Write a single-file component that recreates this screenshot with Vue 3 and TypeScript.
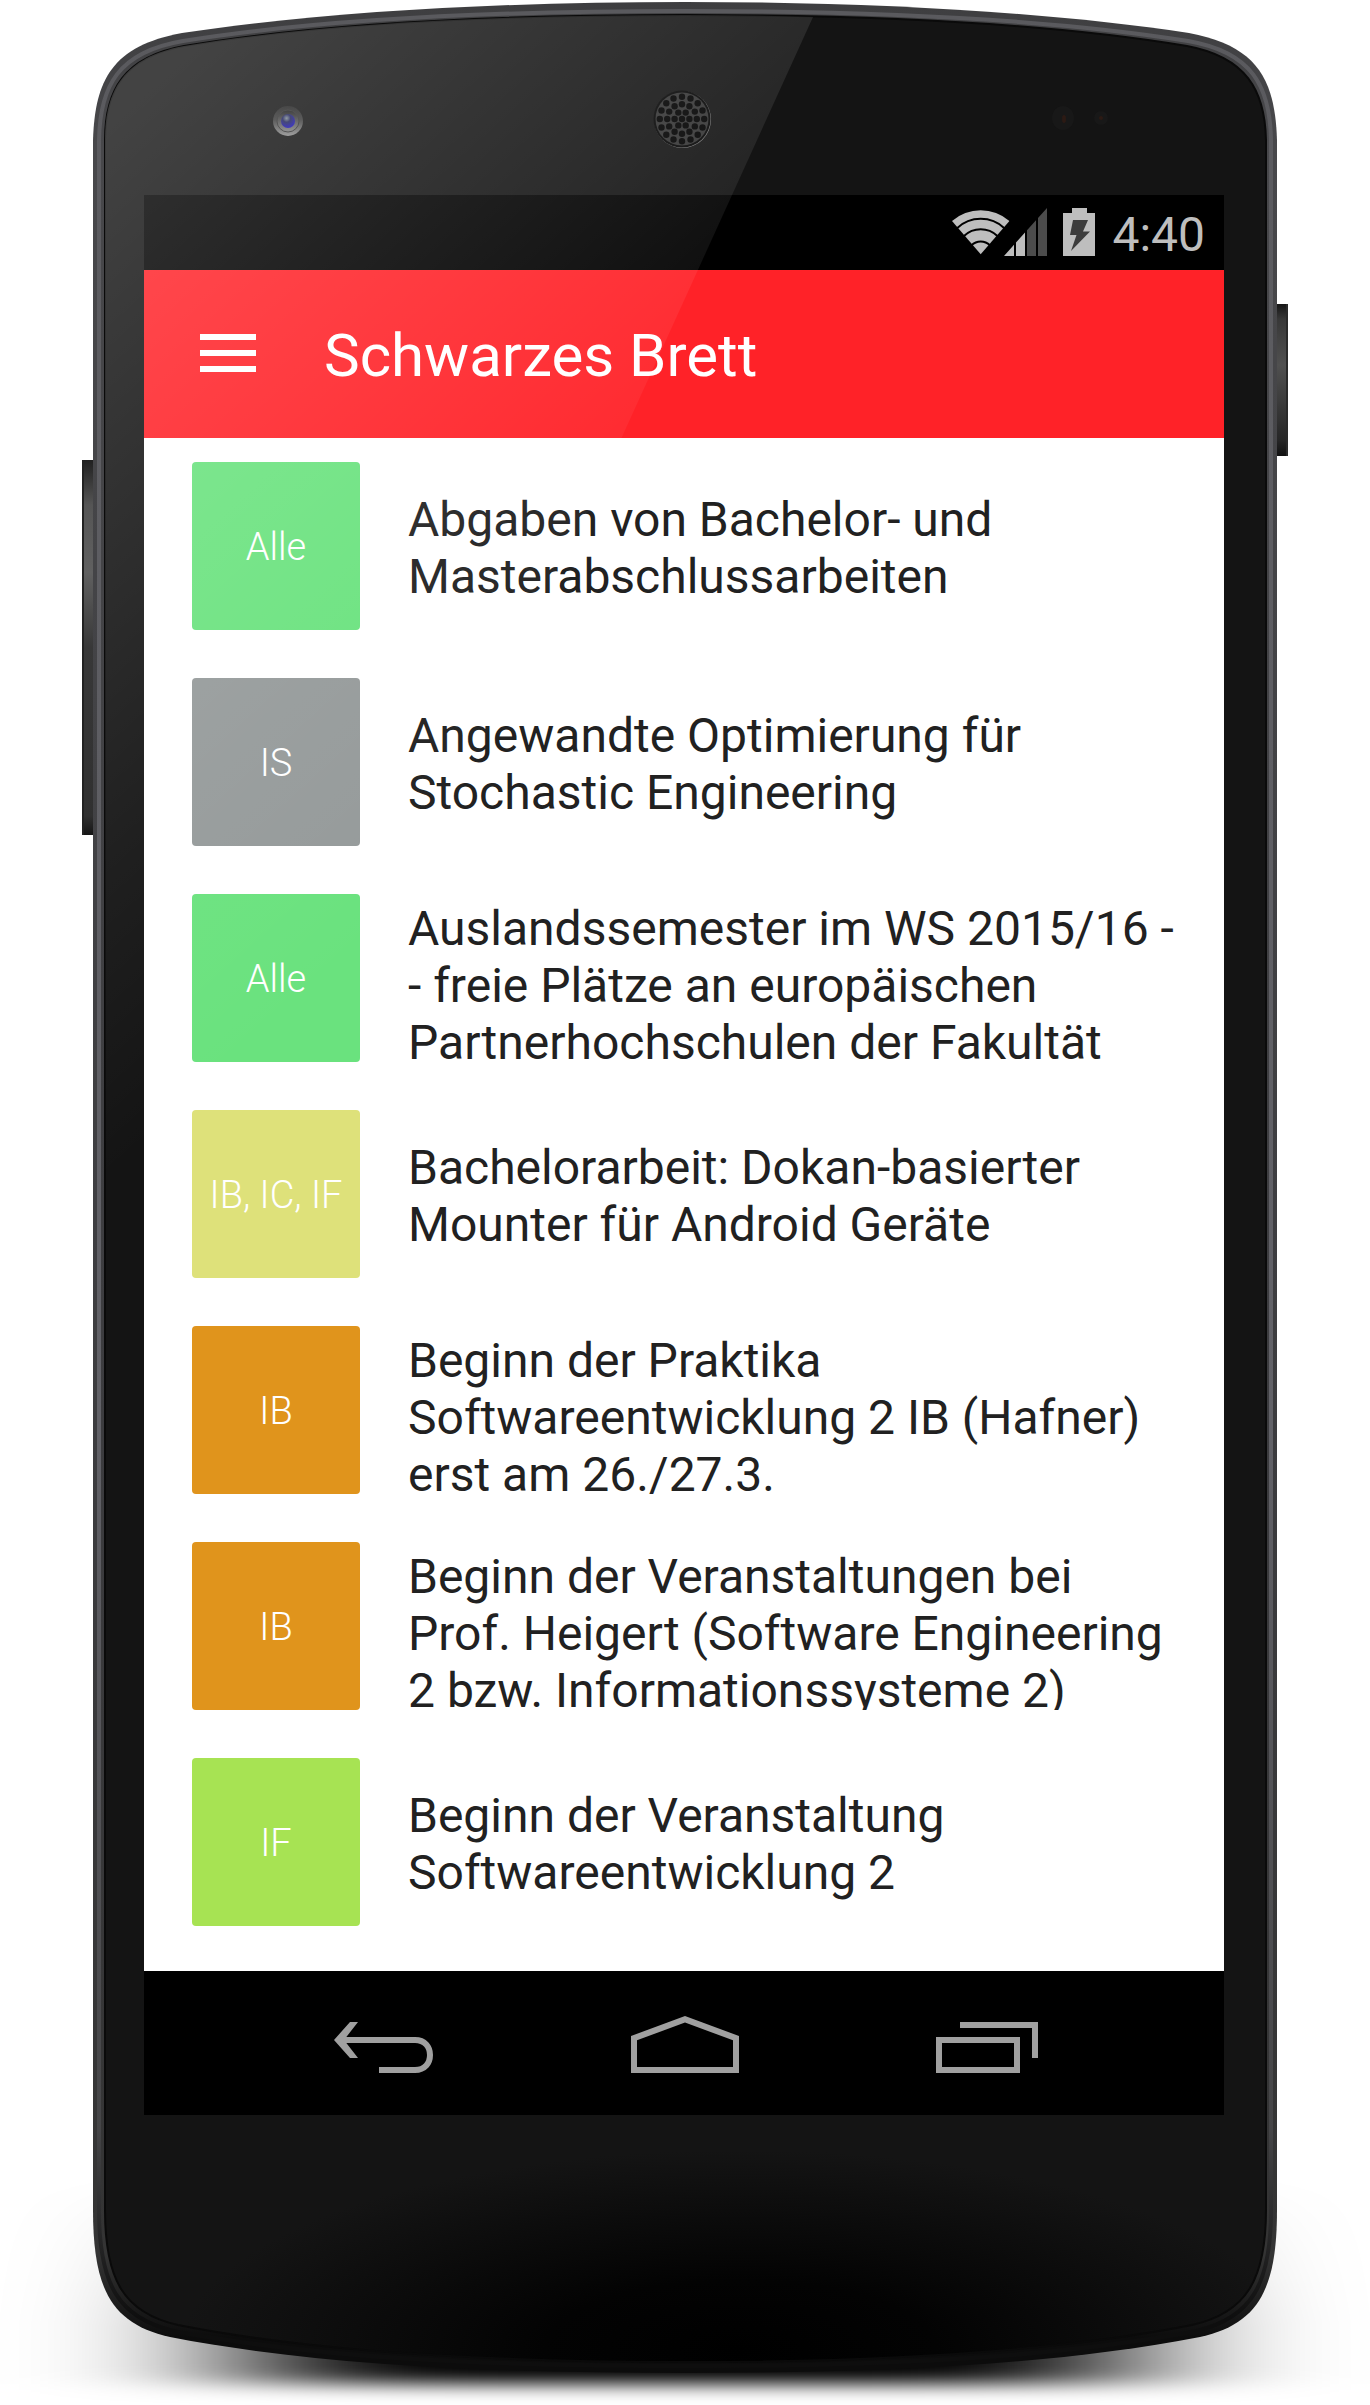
<script setup lang="ts">
interface Notice {
  id: number
  groups: string
  color: string
  title: string
}

const notices: Notice[] = [
  { id: 1, groups: 'Alle', color: '#6ae27e', title: 'Abgaben von Bachelor- und\nMasterabschlussarbeiten' },
  { id: 2, groups: 'IS', color: '#959a9a', title: 'Angewandte Optimierung für\nStochastic Engineering' },
  { id: 3, groups: 'Alle', color: '#6ae27e', title: 'Auslandssemester im WS 2015/16 -\n- freie Plätze an europäischen\nPartnerhochschulen der Fakultät' },
  { id: 4, groups: 'IB, IC, IF', color: '#dee17a', title: 'Bachelorarbeit: Dokan-basierter\nMounter für Android Geräte' },
  { id: 5, groups: 'IB', color: '#e0941c', title: 'Beginn der Praktika\nSoftwareentwicklung 2 IB (Hafner)\nerst am 26./27.3.' },
  { id: 6, groups: 'IB', color: '#e0941c', title: 'Beginn der Veranstaltungen bei\nProf. Heigert (Software Engineering\n2 bzw. Informationssysteme 2)' },
  { id: 7, groups: 'IF', color: '#a7e353', title: 'Beginn der Veranstaltung\nSoftwareentwicklung 2' },
]

interface Hole {
  x: number
  y: number
}

// Earpiece perforation: concentric rings around one centre hole
const rings = [
  { count: 1, radius: 0 },
  { count: 6, radius: 7.4 },
  { count: 12, radius: 14.8 },
  { count: 16, radius: 22.2 },
]
const holes: Hole[] = rings.flatMap(({ count, radius }) =>
  Array.from({ length: count }, (_, i) => {
    const angle = (i / count) * Math.PI * 2
    return { x: 30 + radius * Math.cos(angle), y: 30 + radius * Math.sin(angle) }
  }),
)
</script>

<template>
  <div class="device">
    <svg class="chassis" viewBox="0 0 1370 2405" preserveAspectRatio="none" aria-hidden="true">
      <defs>
        <linearGradient id="shadowFade" x1="0" y1="0" x2="0" y2="1">
          <stop offset="0" stop-color="#000" stop-opacity="0" />
          <stop offset="0.7" stop-color="#000" stop-opacity="1" />
        </linearGradient>
        <filter id="shadowBlur" x="-50%" y="-50%" width="200%" height="200%">
          <feGaussianBlur stdDeviation="105 9" />
        </filter>
        <linearGradient id="rim" x1="0" y1="0" x2="0" y2="1">
          <stop offset="0" stop-color="#3e3e40" />
          <stop offset="0.06" stop-color="#48484b" />
          <stop offset="0.6" stop-color="#3c3c3f" />
          <stop offset="0.95" stop-color="#343434" />
          <stop offset="0.985" stop-color="#0c0c0c" />
        </linearGradient>
        <linearGradient id="rimLight" x1="0" y1="0" x2="0" y2="1">
          <stop offset="0" stop-color="#5a5a5e" />
          <stop offset="0.6" stop-color="#626268" />
          <stop offset="0.9" stop-color="#454547" />
          <stop offset="0.98" stop-color="#0e0e0e" />
        </linearGradient>
        <radialGradient id="face" gradientUnits="userSpaceOnUse" cx="0" cy="0" r="1" gradientTransform="translate(740 2350) scale(560 200)">
          <stop offset="0" stop-color="#000" />
          <stop offset="0.35" stop-color="#030303" />
          <stop offset="1" stop-color="#141414" />
        </radialGradient>
        <linearGradient id="keyLeft" x1="0" y1="0" x2="0" y2="1">
          <stop offset="0" stop-color="#202020" />
          <stop offset="0.12" stop-color="#555" />
          <stop offset="0.3" stop-color="#606060" />
          <stop offset="0.5" stop-color="#383838" />
          <stop offset="0.95" stop-color="#303030" />
          <stop offset="1" stop-color="#151515" />
        </linearGradient>
        <linearGradient id="keyRight" x1="0" y1="0" x2="0" y2="1">
          <stop offset="0" stop-color="#151515" />
          <stop offset="0.1" stop-color="#383838" />
          <stop offset="0.4" stop-color="#505050" />
          <stop offset="0.9" stop-color="#262626" />
          <stop offset="1" stop-color="#111" />
        </linearGradient>
      </defs>
      <rect x="250" y="2180" width="870" height="204" fill="url(#shadowFade)" filter="url(#shadowBlur)" />
      <rect x="82" y="460" width="14" height="375" rx="1" fill="url(#keyLeft)" />
      <rect x="82" y="460" width="2" height="375" fill="#222" />
      <rect x="1274" y="304" width="14" height="152" rx="1" fill="url(#keyRight)" />
      <rect x="1286" y="304" width="2" height="152" fill="#2a2a2a" />
      <path
        fill="url(#rim)"
        d="M93 140C95 80 112 46 182 33C320 12 500 2 685 2C870 2 1050 12 1189 33C1258 46 1275 80 1277 140V2210C1277 2290 1258 2324 1200 2337C1050 2366 870 2373 685 2373C500 2373 320 2366 170 2337C112 2324 93 2290 93 2210Z"
      />
      <path
        fill="none"
        stroke="url(#rimLight)"
        stroke-width="4"
        d="M99 140C100 86 118 52 183 41C320 19 500 11 685 11C870 11 1050 19 1188 41C1252 52 1270 86 1271 140V2210C1271 2284 1252 2318 1196 2331C1050 2359 870 2366 685 2366C500 2366 320 2359 174 2331C118 2318 99 2284 99 2210Z"
      />
      <path
        fill="url(#face)"
        stroke="#0a0a0a"
        stroke-width="2"
        d="M105 140C105 90 124 57 184 46C320 23 500 15 685 15C870 15 1050 23 1187 46C1246 57 1265 90 1266 140V2210C1266 2280 1246 2313 1192 2325C1050 2353 870 2362 685 2362C500 2362 320 2353 178 2325C124 2313 105 2280 105 2210Z"
      />
    </svg>

    <div class="bezel" aria-hidden="true">
      <svg class="camera" width="56" height="60" viewBox="0 0 56 60">
        <defs>
          <linearGradient id="camRing" x1="0" y1="0" x2="0" y2="1">
            <stop offset="0" stop-color="#222" />
            <stop offset="0.45" stop-color="#3a3a3a" />
            <stop offset="1" stop-color="#8c8c8c" />
          </linearGradient>
          <linearGradient id="camInner" x1="0" y1="0" x2="0" y2="1">
            <stop offset="0" stop-color="#1a1a1a" />
            <stop offset="1" stop-color="#808080" />
          </linearGradient>
          <radialGradient id="lens" cx="0.4" cy="0.3" r="0.7">
            <stop offset="0" stop-color="#7c8890" />
            <stop offset="0.4" stop-color="#20245a" />
            <stop offset="1" stop-color="#1a12b0" />
          </radialGradient>
        </defs>
        <circle cx="28" cy="32" r="15" fill="url(#camRing)" />
        <circle cx="28" cy="32" r="11" fill="url(#camInner)" stroke="#333" />
        <circle cx="28" cy="32" r="7" fill="url(#lens)" />
      </svg>
      <svg class="earpiece" width="60" height="60" viewBox="0 0 60 60">
        <circle cx="30.5" cy="30.5" r="28.5" fill="#777" />
        <circle cx="30" cy="30" r="28.5" fill="#050505" />
        <circle cx="30" cy="30" r="26.5" fill="#343434" />
        <circle v-for="(hole, i) in holes" :key="i" :cx="hole.x" :cy="hole.y" r="3.2" fill="#000" />
      </svg>
      <svg class="sensors" width="60" height="60" viewBox="0 0 60 60">
        <ellipse cx="15" cy="29" rx="11" ry="12" fill="#181818" />
        <ellipse cx="16" cy="30" rx="2" ry="4" fill="#2c1a14" />
        <circle cx="53" cy="29" r="7" fill="#181818" />
        <circle cx="53" cy="29" r="2" fill="#2c1a14" />
      </svg>
    </div>

    <div class="screen">
      <div class="status">
        <svg width="95" height="48" viewBox="0 0 95 48" role="img" aria-label="WLAN und Mobilfunk">
          <path fill="#bebebe" d="M28.7 46.3L0 13A44 44 0 0 1 57.4 13Z" />
          <g fill="none" stroke="#000" stroke-width="2">
            <path d="M5 20.2A34.6 34.6 0 0 1 52.4 20.2" />
            <path d="M12 28A24 24 0 0 1 45.4 28" />
            <path d="M19.5 37.2A13 13 0 0 1 37.9 37.2" />
          </g>
          <path fill="#bebebe" d="M52 48L62 36.8V48ZM64 34.6L73 24.5V48H64Z" />
          <path fill="#4c4c4c" d="M75 22.3L84 12.3V48H75ZM86 10L95 0V48H86Z" />
        </svg>
        <svg width="32" height="48" viewBox="0 0 32 48" role="img" aria-label="Akku wird geladen">
          <path fill="#bebebe" d="M0 5H9V0H24V5H32V48H0Z" />
          <path fill="#3c3c3c" d="M10 12H25L20 23.5H27L8 43L13.5 27H7Z" />
        </svg>
        <time class="clock">4:40</time>
      </div>

      <header class="appbar">
        <button class="menu" type="button" aria-label="Menü">
          <svg width="56" height="40" viewBox="0 0 56 40">
            <path fill="#fff" d="M0 0H56V6H0ZM0 16H56V22H0ZM0 32H56V38H0Z" />
          </svg>
        </button>
        <h1 class="title">Schwarzes Brett</h1>
      </header>

      <main class="board">
        <ul class="list">
          <li v-for="notice in notices" :key="notice.id" class="notice">
            <span class="tile" :style="{ backgroundColor: notice.color }">{{ notice.groups }}</span>
            <p class="text">{{ notice.title }}</p>
          </li>
        </ul>
      </main>

      <nav class="navbar" aria-label="Systemnavigation">
        <button type="button" aria-label="Zurück">
          <svg width="99" height="58" viewBox="0 -7 99 58">
            <path fill="#a0a0a0" d="M0 18L16 0H24L10 18L24 36H16Z" />
            <path fill="none" stroke="#a0a0a0" stroke-width="6" d="M7 18H81C91 18 96 25 96 33S91 48 81 48H45" />
          </svg>
        </button>
        <button type="button" aria-label="Startseite">
          <svg width="108" height="58" viewBox="0 -1 108 58">
            <path fill="#a0a0a0" fill-rule="evenodd" d="M54 0L108 20V57H0V20ZM54 6.5L6 24.3V51H102V24.3Z" />
          </svg>
        </button>
        <button type="button" aria-label="Letzte Apps">
          <svg width="102" height="58" viewBox="0 -7 102 58">
            <path fill="#a0a0a0" fill-rule="evenodd" d="M0 15H84V51H0ZM6 21V45H78V21Z" />
            <path fill="#a0a0a0" d="M24 0H102V36H96V6H24Z" />
          </svg>
        </button>
      </nav>
    </div>

    <svg class="glare" viewBox="0 0 1370 2405" preserveAspectRatio="none" aria-hidden="true">
      <defs>
        <linearGradient id="glareFade" gradientUnits="userSpaceOnUse" x1="98" y1="137" x2="621" y2="721">
          <stop offset="0" stop-color="#fff" stop-opacity="0.2" />
          <stop offset="0.7" stop-color="#fff" stop-opacity="0.05" />
          <stop offset="1" stop-color="#fff" stop-opacity="0" />
        </linearGradient>
      </defs>
      <path fill="url(#glareFade)" d="M105 140C105 90 124 57 184 46C320 23 500 15 685 15Q750 15 813 17L105 1573Z" />
    </svg>
  </div>
</template>

<style>
body {
  margin: 0;
  background: #fff;
}
</style>

<style scoped>
.device {
  position: relative;
  display: flex;
  flex-direction: column;
  padding-bottom: 290px;
  overflow: hidden;
  font-family: Roboto, "Liberation Sans", sans-serif;
}

.chassis,
.glare {
  position: absolute;
  inset: 0;
  width: 100%;
  height: 100%;
}

.glare {
  pointer-events: none;
}

svg {
  display: block;
}

.bezel {
  position: relative;
  display: flex;
  align-items: center;
  justify-content: space-between;
  box-sizing: border-box;
  height: 195px;
  padding: 42px 262px 0 260px;
}

.screen {
  position: relative;
  margin: 0 146px 0 144px;
  background: #fff;
}

.status {
  display: flex;
  align-items: center;
  justify-content: flex-end;
  gap: 16px;
  box-sizing: border-box;
  height: 75px;
  padding: 0 19px 2px 0;
  background: #000;
}

.clock {
  padding: 6px 0 0 1px;
  color: #bebebe;
  font-size: 48px;
  line-height: 56px;
}

.appbar {
  display: flex;
  align-items: center;
  gap: 68px;
  height: 168px;
  padding: 0 56px;
  background: #ff2228;
}

button {
  display: flex;
  align-items: center;
  justify-content: center;
  padding: 0;
  border: 0;
  background: none;
  cursor: pointer;
}

.title {
  margin: 0;
  padding-top: 4px;
  color: #fff;
  font-size: 60px;
  font-weight: 400;
  line-height: 72px;
}

.board {
  padding: 24px 48px 45px;
}

.list {
  display: flex;
  flex-direction: column;
  gap: 48px;
  margin: 0;
  padding: 0;
  list-style: none;
}

.notice {
  display: flex;
  align-items: center;
  gap: 48px;
  height: 168px;
}

.tile {
  display: flex;
  flex: none;
  align-items: center;
  justify-content: center;
  box-sizing: border-box;
  width: 168px;
  height: 168px;
  padding-top: 2px;
  border-radius: 4px;
  color: #fff;
  font-size: 38px;
  font-weight: 300;
}

.text {
  box-sizing: border-box;
  max-height: 168px;
  margin: 0;
  padding: 6px 0 3px;
  overflow: hidden;
  color: #212121;
  font-size: 48px;
  line-height: 57px;
  white-space: pre;
}

.navbar {
  display: flex;
  justify-content: center;
  box-sizing: border-box;
  height: 144px;
  padding: 2px 0 0 2px;
  background: #000;
}

.navbar button {
  flex: 0 0 28%;
}
</style>
